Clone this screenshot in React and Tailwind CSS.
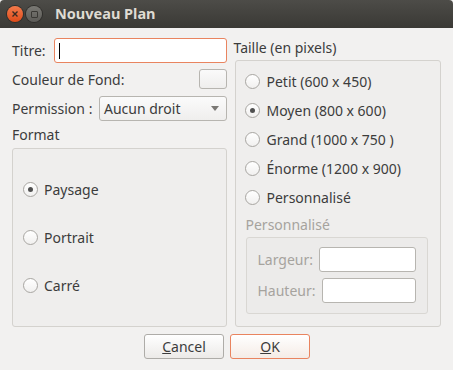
import React from 'react';

function Radio({ label, checked, disabled }) {
    return (
        <div className="flex h-[20px] items-center gap-[6px]">
            <span className="relative flex h-[15px] w-[15px] items-center justify-center rounded-full border border-[#a8a6a2] bg-gradient-to-b from-white to-[#f1f0ef]">
                {checked && <span className="h-[5px] w-[5px] rounded-full bg-[#505050]" />}
            </span>
            <span className={disabled ? 'text-[#a6a39e]' : 'text-[#3c3c3c]'}>{label}</span>
        </div>
    );
}

function Input({ className, focused }) {
    return (
        <div
            className={`rounded-[3px] border bg-white ${focused ? 'border-[#e9845f]' : 'border-[#b7b5b0]'} ${className}`}
        >
            {focused && <div className="ml-[4px] mt-[4px] h-[16px] w-px bg-black" />}
        </div>
    );
}

export default function App() {
    return (
        <div
            className="h-[370px] w-[453px] overflow-hidden bg-[#f2f1f0] text-[14px] text-[#3c3c3c]"
            style={{ fontFamily: '"Noto Sans", "Open Sans", sans-serif' }}
        >
            {/* Title bar */}
            <div className="flex h-[28px] items-center rounded-t-[4px] bg-gradient-to-b from-[#4d4c48] to-[#3a3935] px-[7px]">
                <span className="flex h-[16px] w-[16px] items-center justify-center rounded-full bg-gradient-to-b from-[#f37a4a] to-[#df4a16] shadow-[0_0_0_1px_#2f2e2b]">
                    <svg width="8" height="8" viewBox="0 0 8 8">
                        <path d="M1.5 1.5 L6.5 6.5 M6.5 1.5 L1.5 6.5" stroke="#3a2a22" strokeWidth="1.4" />
                    </svg>
                </span>
                <span className="ml-[3px] flex h-[16px] w-[16px] items-center justify-center rounded-full bg-gradient-to-b from-[#7a7974] to-[#5c5b57] shadow-[0_0_0_1px_#2f2e2b]">
                    <span className="h-[7px] w-[7px] rounded-[1px] border-[1.5px] border-[#3a3935]" />
                </span>
                <span className="ml-[13px] text-[14.5px] font-bold text-[#dfdbd2]">Nouveau Plan</span>
            </div>

            {/* Body */}
            <div className="flex px-[12px] pt-[10px]">
                {/* Left column */}
                <div className="flex w-[216px] flex-col">
                    <div className="flex h-[25px] items-center">
                        <span className="w-[42px]">Titre:</span>
                        <Input focused className="h-[25px] flex-1" />
                    </div>
                    <div className="mt-[6px] flex h-[20px] items-center justify-between">
                        <span>Couleur de Fond:</span>
                        <div className="h-[20px] w-[28px] rounded-[3px] border border-[#b7b5b0] bg-gradient-to-b from-[#fafafa] to-[#efeeed]" />
                    </div>
                    <div className="mt-[7px] flex h-[25px] items-center">
                        <span className="w-[87px]">Permission :</span>
                        <div className="flex h-[25px] flex-1 items-center justify-between rounded-[3px] border border-[#b7b5b0] bg-gradient-to-b from-[#fbfbfb] to-[#efeeed] pl-[4px] pr-[7px]">
                            <span>Aucun droit</span>
                            <svg width="8" height="5" viewBox="0 0 8 5">
                                <path d="M0 0 H8 L4 5 Z" fill="#7a7874" />
                            </svg>
                        </div>
                    </div>
                    <div className="mt-[3px] h-[22px] leading-[22px]">Format</div>
                    <div className="mt-[2px] flex h-[179px] flex-col gap-[28px] rounded-[3px] border border-[#d4d2ce] bg-[#efeeed] pl-[10px] pt-[30px]">
                        <Radio label="Paysage" checked />
                        <Radio label="Portrait" />
                        <Radio label="Carré" />
                    </div>
                </div>

                {/* Right column */}
                <div className="ml-[6px] flex w-[208px] flex-col">
                    <div className="h-[20px] leading-[20px]">Taille (en pixels)</div>
                    <div className="ml-[2px] mt-[2px] flex h-[267px] flex-col rounded-[3px] border border-[#d4d2ce] bg-[#efeeed] pl-[9px] pr-[12px] pt-[10px]">
                        <div className="flex flex-col gap-[9px]">
                            <Radio label="Petit (600 x 450)" />
                            <Radio label="Moyen (800 x 600)" checked />
                            <Radio label="Grand (1000 x 750 )" />
                            <Radio label="Énorme (1200 x 900)" />
                            <Radio label="Personnalisé" />
                        </div>
                        <div className="mt-[8px] h-[20px] leading-[20px] text-[#a6a39e]">Personnalisé</div>
                        <div className="ml-[1px] mt-[2px] flex h-[77px] flex-col gap-[6px] rounded-[3px] border border-[#d9d7d3] bg-[#ecebea] pl-[10px] pr-[11px] pt-[9px]">
                            <div className="flex h-[25px] items-center justify-between">
                                <span className="text-[#a6a39e]">Largeur:</span>
                                <Input className="h-[25px] w-[97px]" />
                            </div>
                            <div className="flex h-[25px] items-center justify-between">
                                <span className="text-[#a6a39e]">Hauteur:</span>
                                <Input className="h-[25px] w-[94px]" />
                            </div>
                        </div>
                    </div>
                </div>
            </div>

            {/* Buttons */}
            <div className="mt-[7px] flex justify-center gap-[6px] pl-[1px]">
                <div className="flex h-[25px] w-[80px] items-center justify-center rounded-[3px] border border-[#aeaca8] bg-gradient-to-b from-white to-[#eceae8]">
                    <span><span className="underline">C</span>ancel</span>
                </div>
                <div className="flex h-[25px] w-[80px] items-center justify-center rounded-[3px] border border-[#e9845f] bg-gradient-to-b from-white to-[#f5ece6]">
                    <span><span className="underline">O</span>K</span>
                </div>
            </div>
        </div>
    );
}
